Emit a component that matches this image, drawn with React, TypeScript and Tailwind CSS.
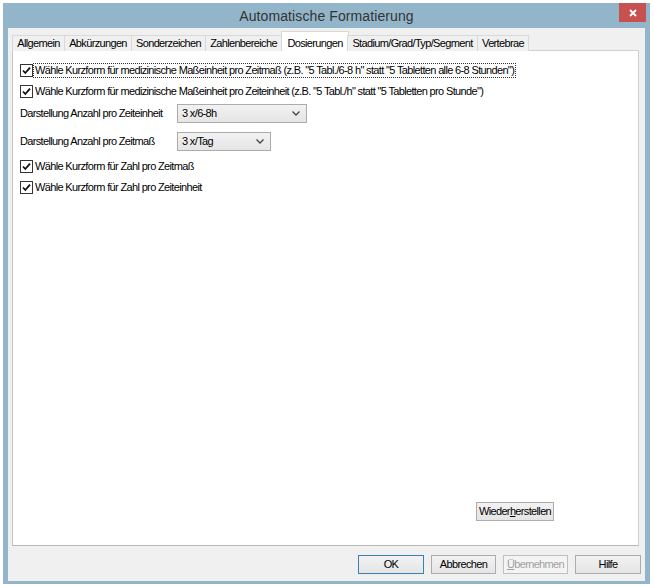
import React from "react";

const font = { fontFamily: '"Liberation Sans", Arial, sans-serif' };

function Check() {
  return (
    <span className="inline-flex w-[13px] h-[13px] shrink-0 border border-[#333333] bg-white items-center justify-center">
      <svg width="11" height="11" viewBox="0 0 11 11">
        <path d="M2 5.5 L4.3 8 L9 2.6" fill="none" stroke="#111" strokeWidth="1.8" />
      </svg>
    </span>
  );
}

function CheckRow({ label, focused }: { label: string; focused?: boolean }) {
  return (
    <div className="flex items-center h-[14px]">
      <Check />
      <span
        className={
          "ml-[1px] pl-[1px] pr-[1px] leading-[13px] whitespace-nowrap " +
          (focused ? "outline outline-1 outline-dotted outline-[#333]" : "")
        }
      >
        {label}
      </span>
    </div>
  );
}

function Combo({ value, width }: { value: string; width: string }) {
  return (
    <div
      className={
        "h-[19px] border border-[#acacac] bg-gradient-to-b from-[#f2f2f2] to-[#e5e5e5] flex items-center justify-between pl-[4px] pr-[6px] " +
        width
      }
    >
      <span className="leading-none">{value}</span>
      <svg width="8" height="5" viewBox="0 0 8 5">
        <path d="M0.5 0.5 L4 4 L7.5 0.5" fill="none" stroke="#444" strokeWidth="1.3" />
      </svg>
    </div>
  );
}

function Btn({
  children,
  def,
  disabled,
  className = "",
}: {
  children: React.ReactNode;
  def?: boolean;
  disabled?: boolean;
  className?: string;
}) {
  const look = disabled
    ? "border-[#bfbfbf] bg-[#f4f4f4] text-[#a0a0a0]"
    : def
    ? "border-[#3c7fb1] bg-gradient-to-b from-[#f2f2f2] to-[#e5e5e5] text-black"
    : "border-[#acacac] bg-gradient-to-b from-[#f2f2f2] to-[#e5e5e5] text-black";
  return (
    <div
      className={
        "h-[19px] border flex items-center justify-center leading-none whitespace-nowrap " + look + " " + className
      }
    >
      {children}
    </div>
  );
}

const tabs = [
  { name: "Allgemein", w: "w-[53px]" },
  { name: "Abkürzungen", w: "w-[68px]" },
  { name: "Sonderzeichen", w: "w-[75px]" },
  { name: "Zahlenbereiche", w: "w-[77px]" },
  { name: "Dosierungen", w: "w-[68px]", active: true },
  { name: "Stadium/Grad/Typ/Segment", w: "w-[131px]" },
  { name: "Vertebrae", w: "w-[52px]" },
];

export default function App() {
  return (
    <div className="w-[654px] h-[588px] bg-white pt-[3px] pl-[3px]" style={font}>
      <div className="w-[647px] h-[581px] bg-[#93b5c9] flex flex-col">
        {/* title bar */}
        <div className="relative h-[25px] shrink-0 flex items-center justify-center">
          <span className="text-[14px] text-[#333333] pt-[1px] tracking-[0.1px]">Automatische Formatierung</span>
          <div className="absolute right-[4px] top-0 w-[27px] h-[19px] bg-[#c75050] flex items-center justify-center">
            <svg width="8" height="8" viewBox="0 0 8 8">
              <path d="M1 1 L7 7 M7 1 L1 7" stroke="#fff" strokeWidth="1.8" />
            </svg>
          </div>
        </div>

        {/* body */}
        <div className="flex-1 mx-[5px] mb-[3px] bg-[#f0f0f0] flex flex-col pl-[4px] pr-[6px] pt-[3px] pb-[7px] text-[11px] tracking-[-0.65px] text-black">
          {/* tabs */}
          <div className="flex items-end h-[20px] shrink-0 relative z-10">
            {tabs.map((t) =>
              t.active ? (
                <div
                  key={t.name}
                  className={
                    "h-[20px] border border-b-0 border-[#d9d9d9] bg-white -mx-[1px] flex items-start justify-center pt-[3px] whitespace-nowrap " +
                    t.w
                  }
                >
                  {t.name}
                </div>
              ) : (
                <div
                  key={t.name}
                  className={
                    "h-[16px] border border-b-0 border-[#d9d9d9] bg-[#f0f0f0] flex items-center justify-center -ml-[1px] first:ml-0 whitespace-nowrap " +
                    t.w
                  }
                >
                  {t.name}
                </div>
              )
            )}
          </div>

          {/* panel */}
          <div className="flex-1 -mt-[1px] border border-[#d0d0d0] border-l-[#c4c4c4] border-b-[#b9b9b9] bg-white flex flex-col pl-[7px] pt-[12px] pb-[24px]">
            <CheckRow
              focused
              label={'Wähle Kurzform für medizinische Maßeinheit pro Zeitmaß (z.B. "5 Tabl./6-8 h" statt "5 Tabletten alle 6-8 Stunden")'}
            />
            <div className="mt-[7px]">
              <CheckRow
                label={'Wähle Kurzform für medizinische Maßeinheit pro Zeiteinheit (z.B. "5 Tabl./h" statt "5 Tabletten pro Stunde")'}
              />
            </div>
            <div className="flex items-center mt-[6px]">
              <span className="w-[157px]">Darstellung Anzahl pro Zeiteinheit</span>
              <Combo value="3 x/6-8h" width="w-[130px]" />
            </div>
            <div className="flex items-center mt-[9px]">
              <span className="w-[157px]">Darstellung Anzahl pro Zeitmaß</span>
              <Combo value="3 x/Tag" width="w-[94px]" />
            </div>
            <div className="mt-[8px]">
              <CheckRow label="Wähle Kurzform für Zahl pro Zeitmaß" />
            </div>
            <div className="mt-[7px]">
              <CheckRow label="Wähle Kurzform für Zahl pro Zeiteinheit" />
            </div>
            <div className="flex-1" />
            <div className="flex justify-end pr-[84px]">
              <Btn className="w-[78px]">
                <span>
                  Wieder<span className="underline">h</span>erstellen
                </span>
              </Btn>
            </div>
          </div>

          {/* bottom buttons */}
          <div className="flex justify-end gap-[7px] mt-[9px] -mr-[2px]">
            <Btn def className="w-[66px]">
              OK
            </Btn>
            <Btn className="w-[65px]">Abbrechen</Btn>
            <Btn disabled className="w-[65px]">
              <span>
                <span className="underline">Ü</span>bernehmen
              </span>
            </Btn>
            <Btn className="w-[66px]">Hilfe</Btn>
          </div>
        </div>
      </div>
    </div>
  );
}
